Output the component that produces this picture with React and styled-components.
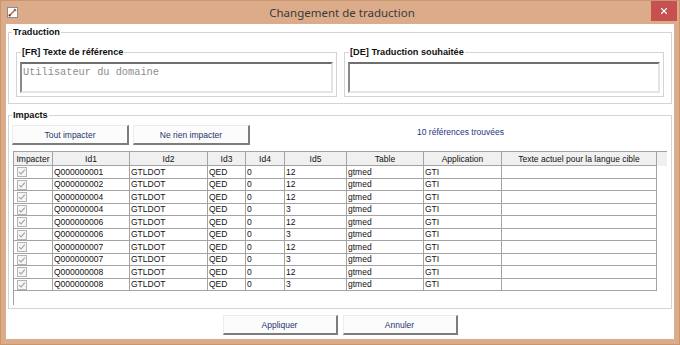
import React from 'react';
import styled, { createGlobalStyle } from 'styled-components';
import { X } from 'lucide-react';

const GlobalStyle = createGlobalStyle`
    html, body {
        margin: 0;
        padding: 0;
        background: #ffffff;
    }
    * {
        box-sizing: border-box;
    }
`;

const Window = styled.div`
    width: 680px;
    height: 345px;
    background: #dcab8a;
    border: 1px solid #c9976f;
    display: flex;
    flex-direction: column;
    font-family: 'Liberation Sans', Arial, sans-serif;
`;

const TitleBar = styled.div`
    height: 23px;
    display: grid;
    grid-template-columns: 1fr auto 1fr;
    align-items: center;
    padding: 0 2px 0 6px;
`;

const TitleIcon = styled.svg`
    width: 11px;
    height: 11px;
    display: block;
`;

const Title = styled.div`
    font-family: 'Noto Sans', 'Open Sans', sans-serif;
    font-size: 11.5px;
    color: #3a3a3a;
    line-height: 16px;
`;

const CloseButton = styled.div`
    justify-self: end;
    align-self: start;
    width: 26px;
    height: 20px;
    background: #c75050;
    display: flex;
    align-items: center;
    justify-content: center;
    color: #ffffff;
`;

const Client = styled.div`
    flex: 1;
    margin: 0 5px 5px;
    background: #ffffff;
    padding: 2px 2px 0 2px;
    display: flex;
    flex-direction: column;
`;

const Group = styled.fieldset`
    margin: ${(p) => (p.$gap ? `${p.$gap}px` : '0')} 0 0 0;
    padding: 0;
    min-width: 0;
    border: 1px solid #d4d4d4;
`;

const Legend = styled.legend`
    margin-left: ${(p) => p.$indent}px;
    padding: 0 1px;
    font-size: 9.2px;
    font-weight: bold;
    line-height: 12px;
    color: #111111;
`;

const GroupBody = styled.div`
    padding: ${(p) => p.$pad};
`;

const TextRow = styled.div`
    display: grid;
    grid-template-columns: 321px 320px;
    justify-content: space-between;
`;

const TextBox = styled.div`
    height: 31px;
    border-style: solid;
    border-width: 2px 2px 2px 2px;
    border-color: #6e6e6e #e4e4e4 #e4e4e4 #8a8a8a;
    background: #ffffff;
    padding: 2px 1px;
    font-family: 'Liberation Mono', 'Courier New', monospace;
    font-size: 10.3px;
    line-height: 13px;
    color: #8e8e8e;
`;

const Toolbar = styled.div`
    display: flex;
    gap: 4px;
    height: 20px;
`;

const Button = styled.button`
    width: ${(p) => p.$w}px;
    height: 20px;
    padding: 0;
    background: #fcfcfc;
    border-style: solid;
    border-width: 1px 2px 2px 1px;
    border-color: #ececec #7c7c7c #7c7c7c #ececec;
    font-family: 'Liberation Sans', Arial, sans-serif;
    font-size: 8.5px;
    color: #24346e;
`;

const Count = styled.div`
    flex: 1;
    text-align: center;
    padding-top: 1px;
    font-size: 8.5px;
    line-height: 12px;
    color: #1d3384;
`;

const GridBox = styled.div`
    margin: 6px 0 0 1px;
    height: 154px;
    border-left: 1px solid #a3a3a3;
    border-top: 1px solid #a3a3a3;
    background: #ffffff;
    overflow: hidden;
`;

const Table = styled.table`
    width: 100%;
    table-layout: fixed;
    border-collapse: separate;
    border-spacing: 0;
    font-size: 8.5px;
    color: #111111;
`;

const Col = styled.col`
    width: ${(p) => (p.$w ? `${p.$w}px` : 'auto')};
`;

const Head = styled.th`
    height: 14px;
    padding: 0;
    background: #f0f0f0;
    font-weight: normal;
    text-align: center;
    line-height: 12px;
    border-right: ${(p) => (p.$filler ? 'none' : '1px solid #a3a3a3')};
    border-bottom: ${(p) => (p.$filler ? 'none' : '1px solid #a3a3a3')};
    white-space: nowrap;
    overflow: hidden;
`;

const Cell = styled.td`
    height: ${(p) => (p.$tall ? 13 : 12)}px;
    padding: 0 0 0 1px;
    line-height: 11px;
    text-align: left;
    vertical-align: middle;
    border-right: ${(p) => (p.$filler ? 'none' : '1px solid #a3a3a3')};
    border-bottom: ${(p) => (p.$filler ? 'none' : '1px solid #a3a3a3')};
    white-space: nowrap;
    overflow: hidden;
`;

const CheckBox = styled.span`
    display: block;
    width: 10px;
    height: 10px;
    margin-left: 2px;
    border: 1px solid #b4b4b4;
    background: #f6f6f6;
`;

const Footer = styled.div`
    height: 30px;
    display: flex;
    justify-content: center;
    gap: 5px;
    padding-top: 6px;
`;

const columns = [
    { label: 'Impacter', w: 39 },
    { label: 'Id1', w: 77 },
    { label: 'Id2', w: 78 },
    { label: 'Id3', w: 38 },
    { label: 'Id4', w: 39 },
    { label: 'Id5', w: 62 },
    { label: 'Table', w: 77 },
    { label: 'Application', w: 78 },
    { label: 'Texte actuel pour la langue cible', w: 155 },
];

const rows = [
    ['Q000000001', '12'],
    ['Q000000002', '12'],
    ['Q000000004', '12'],
    ['Q000000004', '3'],
    ['Q000000006', '12'],
    ['Q000000006', '3'],
    ['Q000000007', '12'],
    ['Q000000007', '3'],
    ['Q000000008', '12'],
    ['Q000000008', '3'],
];

const Check = () => (
    <CheckBox>
        <svg width="8" height="8" viewBox="0 0 8 8">
            <path d="M1.2 4.2 L3 6 L6.8 1.6" fill="none" stroke="#a0a0a0" strokeWidth="1.1" />
        </svg>
    </CheckBox>
);

const App = () => {
    return (
        <>
            <GlobalStyle />
            <Window>
                <TitleBar>
                    <TitleIcon viewBox="0 0 11 11">
                        <rect x="0.5" y="0.5" width="10" height="10" fill="#ffffff" stroke="#8c8c8c" />
                        <path d="M2.5 8.5 L8.5 2.5" stroke="#d9622b" strokeWidth="1.6" />
                        <path d="M7.2 1.8 L9.2 3.8" stroke="#3d5fa8" strokeWidth="1.2" />
                        <circle cx="2.6" cy="8.4" r="1.1" fill="#5a2a1a" />
                    </TitleIcon>
                    <Title>Changement de traduction</Title>
                    <CloseButton>
                        <X size={10} strokeWidth={2.6} />
                    </CloseButton>
                </TitleBar>
                <Client>
                    <Group>
                        <Legend $indent={3}>Traduction</Legend>
                        <GroupBody $pad="8px 7px 6px 7px">
                            <TextRow>
                                <Group>
                                    <Legend $indent={4}>[FR] Texte de référence</Legend>
                                    <GroupBody $pad="4px 3px 3px 3px">
                                        <TextBox>Utilisateur du domaine</TextBox>
                                    </GroupBody>
                                </Group>
                                <Group>
                                    <Legend $indent={4}>[DE] Traduction souhaitée</Legend>
                                    <GroupBody $pad="4px 3px 3px 3px">
                                        <TextBox />
                                    </GroupBody>
                                </Group>
                            </TextRow>
                        </GroupBody>
                    </Group>
                    <Group $gap={5}>
                        <Legend $indent={3}>Impacts</Legend>
                        <GroupBody $pad="4px 4px 3px 3px">
                            <Toolbar>
                                <Button $w={117}>Tout impacter</Button>
                                <Button $w={117}>Ne rien impacter</Button>
                                <Count>10 références trouvées</Count>
                            </Toolbar>
                            <GridBox>
                                <Table>
                                    <colgroup>
                                        {columns.map((c) => (
                                            <Col key={c.label} $w={c.w} />
                                        ))}
                                        <Col />
                                    </colgroup>
                                    <thead>
                                        <tr>
                                            {columns.map((c) => (
                                                <Head key={c.label}>{c.label}</Head>
                                            ))}
                                            <Head $filler />
                                        </tr>
                                    </thead>
                                    <tbody>
                                        {rows.map(([id1, id5], i) => {
                                            const tall = i % 2 === 0;
                                            return (
                                                <tr key={i}>
                                                    <Cell $tall={tall}>
                                                        <Check />
                                                    </Cell>
                                                    <Cell $tall={tall}>{id1}</Cell>
                                                    <Cell $tall={tall}>GTLDOT</Cell>
                                                    <Cell $tall={tall}>QED</Cell>
                                                    <Cell $tall={tall}>0</Cell>
                                                    <Cell $tall={tall}>{id5}</Cell>
                                                    <Cell $tall={tall}>gtmed</Cell>
                                                    <Cell $tall={tall}>GTI</Cell>
                                                    <Cell $tall={tall} />
                                                    <Cell $tall={tall} $filler />
                                                </tr>
                                            );
                                        })}
                                    </tbody>
                                </Table>
                            </GridBox>
                        </GroupBody>
                    </Group>
                    <Footer>
                        <Button $w={115}>Appliquer</Button>
                        <Button $w={115}>Annuler</Button>
                    </Footer>
                </Client>
            </Window>
        </>
    );
};

export default App;
